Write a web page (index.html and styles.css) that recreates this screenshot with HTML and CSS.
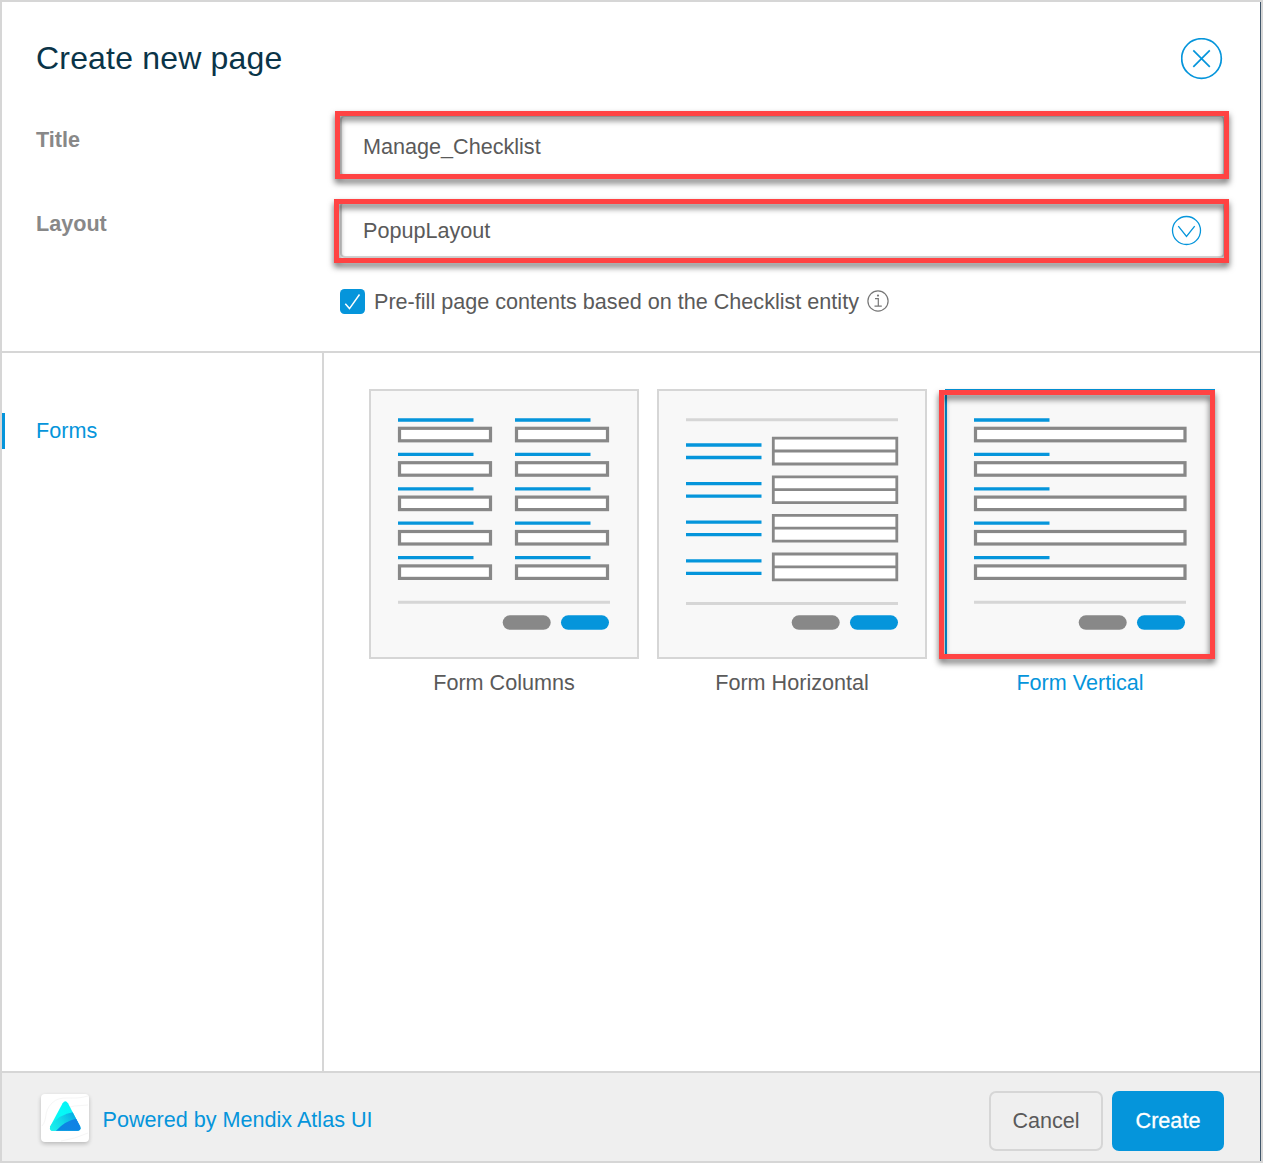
FILE: index.html
```html
<!DOCTYPE html>
<html lang="en">
<head>
<meta charset="utf-8">
<title>Create new page</title>
<link rel="stylesheet" href="styles.css">
</head>
<body>
<svg width="0" height="0" class="defs" aria-hidden="true">
  <defs>
    <g id="field-short">
      <path class="accent" d="M29 31h75.500"/>
      <rect class="box" x="30.500" y="39.300" width="91" height="12.500"/>
    </g>
    <g id="field-long">
      <path class="accent" d="M29 31h75.500"/>
      <rect class="box" x="30.500" y="39.300" width="209.500" height="12.500"/>
    </g>
    <g id="field-pair">
      <path class="accent" d="M29 56h75.500M29 68.500h75.500"/>
      <path class="box thin" d="M116.300 49.200h123.500v25.800H116.300zM116.300 62h123.500"/>
    </g>
    <g id="actions">
      <rect class="secondary" x="133.700" y="226.300" width="48" height="14.500" rx="7.250"/>
      <rect class="primary" x="192" y="226.300" width="48" height="14.500" rx="7.250"/>
    </g>
  </defs>
</svg>
<div class="dialog">
  <header class="head">
    <div class="title-row">
      <h1>Create new page</h1>
      <button class="close" aria-label="Close">
        <svg width="42" height="42" viewBox="0 0 42 42"><circle cx="20.500" cy="20.500" r="19.800"/><path d="M12.300 12.300l16.500 16.500M28.800 12.300L12.300 28.800"/></svg>
      </button>
    </div>
    <div class="form">
      <label class="name">Title</label>
      <div class="control marked title-control"><span>Manage_Checklist</span></div>
      <label class="name">Layout</label>
      <div class="control marked layout-control">
        <span>PopupLayout</span>
        <svg class="chevron" width="30" height="30" viewBox="0 0 30 30"><circle cx="14.500" cy="14.500" r="14"/><path d="M6.300 10.200L14.500 20.500l8.200-10.300"/></svg>
      </div>
    </div>
    <div class="prefill">
      <svg class="check" width="25" height="25" viewBox="0 0 25 25"><rect width="25" height="25" rx="4.500"/><path d="M5.300 14.800l4.200 4.800L19.500 5.500"/></svg>
      <span class="prefill-text">Pre-fill page contents based on the Checklist entity</span>
      <svg class="info" width="22" height="22" viewBox="0 0 22 22"><circle cx="11" cy="11" r="10.100"/><path d="M8 8.700h3.300v7.300M7.500 16.200h7.300"/><circle class="dot" cx="11" cy="5.600" r="1.100"/></svg>
    </div>
  </header>
  <main class="body">
    <nav class="side"><a>Forms</a></nav>
    <section class="cards">
      <figure>
        <div class="thumb">
          <svg width="266" height="266" viewBox="2 2 266 266">
            <use href="#field-short"/><use href="#field-short" x="117"/>
            <use href="#field-short" y="34.400"/><use href="#field-short" x="117" y="34.400"/>
            <use href="#field-short" y="68.800"/><use href="#field-short" x="117" y="68.800"/>
            <use href="#field-short" y="103.200"/><use href="#field-short" x="117" y="103.200"/>
            <use href="#field-short" y="137.600"/><use href="#field-short" x="117" y="137.600"/>
            <path class="rule" d="M29 213.300h212"/>
            <use href="#actions"/>
          </svg>
        </div>
        <figcaption>Form Columns</figcaption>
      </figure>
      <figure>
        <div class="thumb">
          <svg width="266" height="266" viewBox="2 2 266 266">
            <path class="rule" d="M29 30.800h212M29 214.500h212"/>
            <use href="#field-pair"/><use href="#field-pair" y="38.600"/>
            <use href="#field-pair" y="77.200"/><use href="#field-pair" y="115.800"/>
            <use href="#actions" x="1"/>
          </svg>
        </div>
        <figcaption>Form Horizontal</figcaption>
      </figure>
      <figure class="selected">
        <div class="thumb marked">
          <svg width="266" height="266" viewBox="2 2 266 266">
            <use href="#field-long"/><use href="#field-long" y="34.400"/>
            <use href="#field-long" y="68.800"/><use href="#field-long" y="103.200"/>
            <use href="#field-long" y="137.600"/>
            <path class="rule" d="M29 213.300h212"/>
            <use href="#actions"/>
          </svg>
        </div>
        <figcaption>Form Vertical</figcaption>
      </figure>
    </section>
  </main>
  <footer class="foot">
    <div class="brand">
      <svg width="48" height="48" viewBox="0 0 48 48">
        <defs>
          <linearGradient id="cyan" x1="0" y1="1" x2="1" y2="0"><stop offset="0" stop-color="#22e5e2"/><stop offset=".5" stop-color="#06faf7"/><stop offset="1" stop-color="#08e8f5"/></linearGradient>
          <linearGradient id="band" gradientUnits="userSpaceOnUse" x1="9" y1="36" x2="34" y2="20"><stop offset="0" stop-color="#1cf3ec"/><stop offset=".5" stop-color="#12d8e8"/><stop offset="1" stop-color="#08a8e4"/></linearGradient>
          <linearGradient id="blue" x1="0" y1="1" x2="1" y2="0"><stop offset="0" stop-color="#078cdf"/><stop offset="1" stop-color="#157de8"/></linearGradient>
          <clipPath id="peak"><path d="M21.600 9.200Q24.300 5.500 27 9.200L39 32.200Q40.500 36.300 36.500 36.800H12Q8 36.500 9.300 32.300z"/></clipPath>
        </defs>
        <path class="contour" d="M1 32C7 25 2 18 11 9S31 7 47 2M20 15Q33 11 47 11M20 47Q34 45 47 39"/>
        <g clip-path="url(#peak)">
          <rect width="48" height="48" fill="url(#cyan)"/>
          <path d="M8 33Q18 20 33 18L48 28V48H8z" fill="url(#band)"/>
          <path d="M14 38Q23 27 36 24.500L48 22V48H14z" fill="url(#blue)"/>
        </g>
      </svg>
    </div>
    <a class="powered">Powered by Mendix Atlas UI</a>
    <button class="btn cancel">Cancel</button>
    <button class="btn create">Create</button>
  </footer>
</div>
</body>
</html>
```

FILE: styles.css
```css
* { box-sizing: border-box; }
body {
  margin: 0;
  background: #d6d6d6;
  color: #5a5a5a;
  font: 21.6px/26px "Liberation Sans", Arial, sans-serif;
}
svg { display: block; flex: none; fill: none; }
.defs { position: absolute; }
button { padding: 0; font: inherit; }

.dialog {
  display: flex;
  flex-direction: column;
  width: 1261px;
  height: 1161px;
  border: solid #d6d6d6;
  border-width: 2px 0 0 2px;
  box-shadow: inset -1px 0 #40566a;
  background: #fff;
  padding-right: 1px;
}

.head {
  flex: none;
  height: 351px;
  border-bottom: 2px solid #d6d6d6;
}
.title-row {
  display: flex;
  justify-content: space-between;
  padding: 36px 37px 0 34px;
  height: 113px;
}
h1 {
  margin: 2px 0 0;
  color: #0a3448;
  font-size: 32px;
  line-height: 36px;
  font-weight: 400;
  letter-spacing: .18px;
}
.close {
  width: 42px;
  height: 42px;
  border: 0;
  background: none;
}
.close svg, .chevron { stroke: #0595db; stroke-width: 1.700; }
.chevron { stroke-width: 1.300; overflow: visible; }

.form {
  display: grid;
  grid-template-columns: 304px 885px;
  grid-template-rows: 62px 57px;
  row-gap: 24px;
  padding-left: 34px;
}
.name {
  color: #888;
  font-weight: 700;
  padding-top: 12px;
}
.name + .control + .name { padding-top: 10px; }
.control {
  position: relative;
  display: flex;
  align-items: center;
  justify-content: space-between;
  border: 2px solid #d6d6d6;
  border-radius: 5px;
  padding: 1px 21px 0 21px;
}
.layout-control { padding-top: 2px; }
.marked { position: relative; }
.marked::after {
  content: "";
  position: absolute;
  border: 5px solid #ff4343;
  filter: drop-shadow(0 4px 3px rgba(0, 0, 0, .6));
}
.title-control::after { inset: -6px -6px -4px -7px; }
.layout-control::after { inset: -4px -6px -7px -8px; }

.prefill {
  display: flex;
  align-items: center;
  height: 26px;
  margin-top: 30px;
  padding-left: 338px;
}
.prefill-text { padding-top: 2px; }
.check { margin-right: 9px; }
.check rect { fill: #0595db; }
.check path { stroke: #fff; stroke-width: 1.500; }
.info { margin: -1px 0 0 8.5px; stroke: #777; stroke-width: 1.200; }
.info .dot { fill: #777; stroke: none; }

.body {
  display: flex;
  flex: 1;
}
.side {
  width: 322px;
  border-right: 2px solid #d6d6d6;
  padding-top: 60px;
}
.side a {
  display: block;
  border-left: 3px solid #0595db;
  padding-left: 31px;
  line-height: 36px;
  color: #0595db;
}
.cards {
  display: flex;
  gap: 18px;
  padding: 36px 0 0 45px;
}
figure { margin: 0; width: 270px; }
.thumb {
  height: 270px;
  border: 2px solid #d6d6d6;
  background: #f8f8f8;
}
.accent { stroke: #0595db; stroke-width: 3.300; }
.box { fill: #fff; stroke: #888; stroke-width: 3.200; }
.box.thin { stroke-width: 2.800; }
.rule { stroke: #d6d6d6; stroke-width: 3; }
.secondary { fill: #888; }
.primary { fill: #0595db; }
figcaption { padding-top: 11px; text-align: center; }
.selected .thumb { border-color: #0595db; }
.selected figcaption { color: #0595db; }
.thumb.marked::after { inset: -1px -2px -2px -8px; }

.foot {
  display: flex;
  flex: none;
  height: 90px;
  border-top: 2px solid #d6d6d6;
  background: #efefef;
  padding: 18px 36px 0 39px;
}
.brand {
  width: 48px;
  height: 48px;
  margin: 3px 13.5px 0 0;
  border-radius: 4px;
  background: #fff;
  box-shadow: 0 2px 4px rgba(0, 0, 0, .22);
}
.contour { stroke: #f6f6f6; }
.powered {
  margin-top: 16px;
  margin-right: auto;
  color: #0595db;
}
.btn {
  height: 60px;
  border: 2px solid #d6d6d6;
  border-radius: 7px;
  background: transparent;
  color: #5a5a5a;
}
.cancel { width: 114px; }
.create {
  width: 112px;
  margin-left: 9px;
  border-color: #0595db;
  background: #0595db;
  color: #fff;
  -webkit-text-stroke: .3px #fff;
}
```
